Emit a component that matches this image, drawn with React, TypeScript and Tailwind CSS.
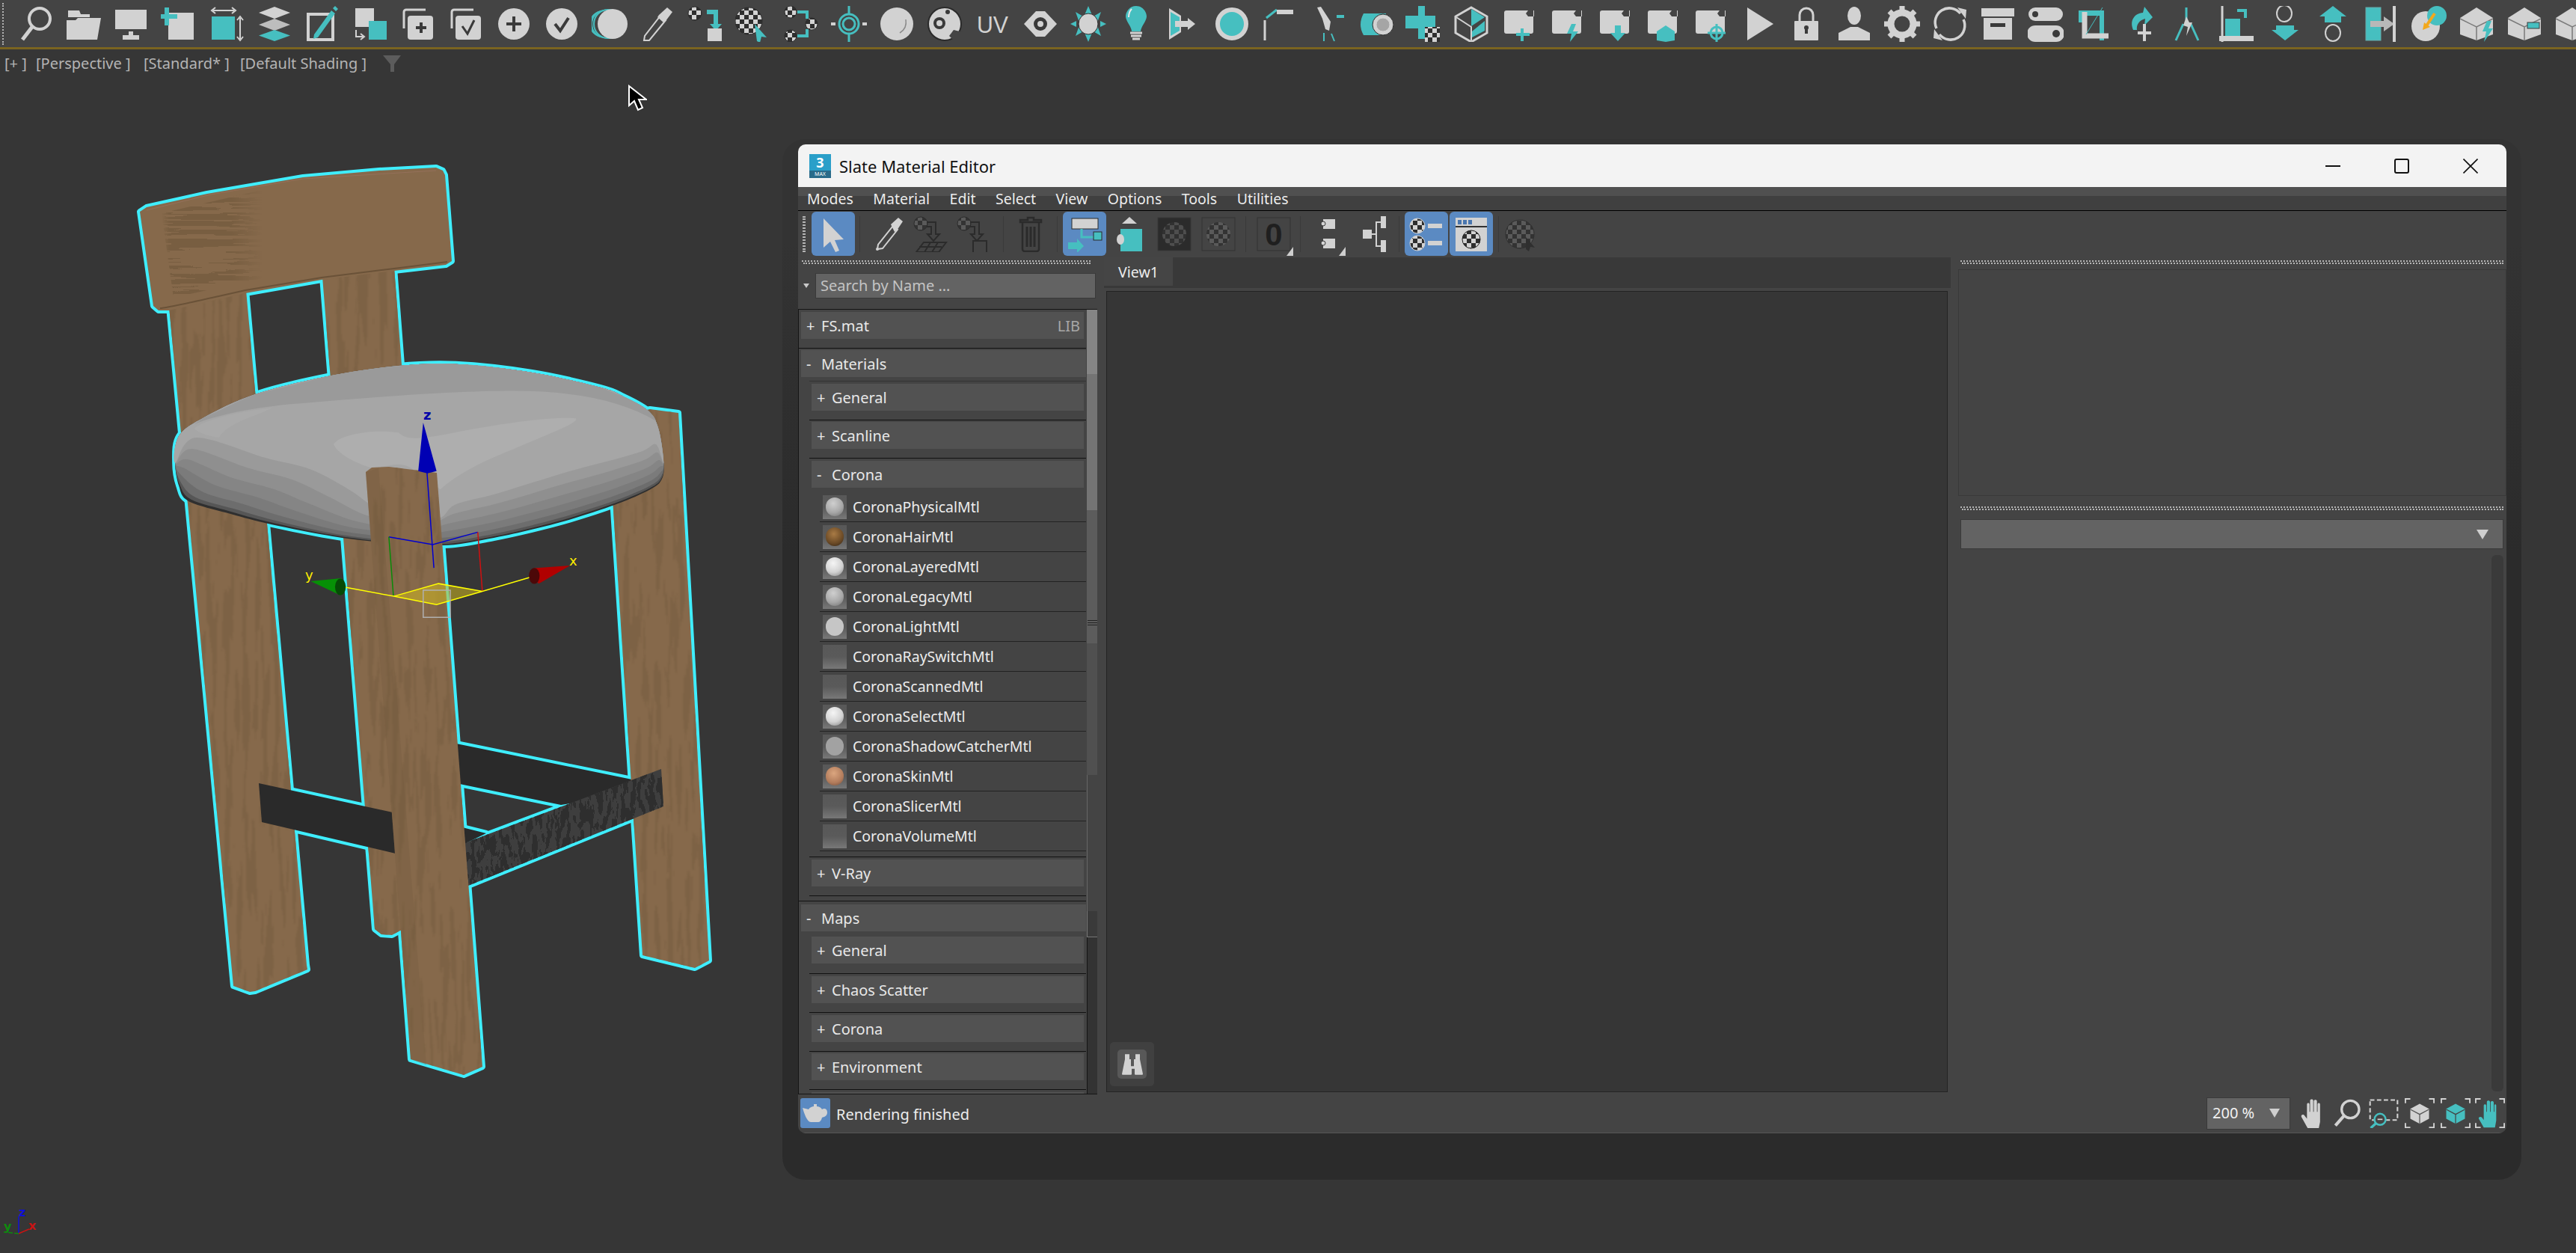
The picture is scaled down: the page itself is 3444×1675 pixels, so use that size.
import React from 'react';

const G = '#d2d2d2';
const T = '#46bfc0';
const D = '#3a3a3a';
const DIM = '#2b2b2b';
const BG = '#444444';

const P: React.FC<{ d: string; f?: string }> = ({ d, f = G }) => <path d={d} fill={f} />;
const L: React.FC<{ d: string; s?: string; w?: number }> = ({ d, s = G, w = 3 }) => (
    <path d={d} fill="none" stroke={s} strokeWidth={w} />
);
const Chk: React.FC<{ cx: number; cy: number; r: number; s?: string; dim?: boolean }> = ({ cx, cy, r, s = DIM, dim }) => (
    <circle cx={cx} cy={cy} r={r} fill={dim ? 'url(#chkdim)' : 'url(#chk)'} stroke={s} strokeWidth={1} />
);

const Icon: React.FC<{ size?: number; children: React.ReactNode }> = ({ size = 48, children }) => (
    <svg width={size} height={size} viewBox="0 0 48 48" className="shrink-0">
        {children}
    </svg>
);

const BaseBox = () => <P d="M7 6h29l-3 4 3 4h8v-8l-1 0v28a3 3 0 0 1-3 3H7a3 3 0 0 1-3-3V9a3 3 0 0 1 3-3z" />;

const Cube = () => (
    <>
        <P d="M24 2 46 16V38L24 46 2 38V16z" />
        <L d="M2 17 24 28 46 17M24 28V46" s="#7a7a7a" w={1.5} />
    </>
);

// main toolbar, left to right
const MAIN_ICONS: React.ReactNode[] = [
    <><circle cx="30" cy="17" r="14" fill="none" stroke={G} strokeWidth="4" /><L d="M20 28 7 45" w={5} /></>,
    <><P d="M4 6h15l2 5h12v4H4z" /><P d="M2 45V19h12l3-3h31l-5 29z" /></>,
    <><rect x="3" y="5" width="42" height="26" fill={G} /><rect x="21" y="34" width="6" height="5" fill={G} /><rect x="13" y="39" width="22" height="6" fill={G} /></>,
    <><rect x="10" y="9" width="34" height="36" fill={G} /><rect x="5" y="2" width="6" height="24" fill={T} /><rect x="0" y="11" width="22" height="6" fill={T} /></>,
    <><rect x="4" y="14" width="31" height="31" fill={T} /><L d="M6 6h28M9 2 4 6l5 4M31 2l5 4-5 4" w={2} /><L d="M42 16v28M38 19l4-5 4 5M38 41l4 5 4-5" w={2} /></>,
    <><P d="M24 1 45 9 24 17 3 9z" /><P d="M24 17 45 25 24 33 3 25z" f="#bdbdbd" /><P d="M24 32 45 39.500 24 47 3 39.500z" f={T} /></>,
    <><rect x="5" y="11" width="33" height="34" fill="none" stroke={G} strokeWidth="4" /><P d="M13 38 36 6l5 4-23 32-6 2z" f={T} /><P d="M38 3l3-3 4 4-3 3z" f={T} /></>,
    <><rect x="4" y="3" width="25" height="25" fill={G} /><rect x="22" y="20" width="24" height="25" fill={T} /><L d="M5 32v9h10M11 37l5 4-5 4" w={2} /></>,
    <><L d="M5 30V8a3 3 0 0 1 3-3h26" w={3} /><rect x="10" y="13" width="34" height="32" rx="4" fill={G} /><L d="M28 22v14M21 29h14" s={D} w={4} /></>,
    <><L d="M5 30V8a3 3 0 0 1 3-3h26" w={3} /><rect x="10" y="13" width="34" height="32" rx="4" fill={G} /><L d="M19 27l7 10 9-18" s={D} w={3} /></>,
    <><circle cx="24" cy="24" r="21" fill={G} /><L d="M24 14v20M14 24h20" s={D} w={4} /></>,
    <><circle cx="24" cy="24" r="21" fill={G} /><L d="M15 24l7 9 11-17" s={D} w={4} /></>,
    <><circle cx="15" cy="24" r="17" fill="none" stroke={T} strokeWidth="2" /><circle cx="18" cy="24" r="18" fill="none" stroke={T} strokeWidth="2" /><circle cx="22" cy="24" r="19" fill={BG} stroke={T} strokeWidth="2" /><circle cx="28" cy="24" r="20" fill={G} /></>,
    <><P d="M6 40 27 14l7 6-21 26-7 2z" f={BG} /><L d="M6 46l1-6 21-27 7 6-22 27z" w={2} /><P d="M26 12l11-10 7 6-9 12-3 2-8-7z" /></>,
    <><Chk cx={10} cy={10} r={9} /><L d="M26 8h12v20" s={T} w={6} /><P d="M30 24h16l-8 9z" f={T} /><rect x="27" y="30" width="19" height="17" fill={G} /></>,
    <><Chk cx={18} cy={20} r={18} /><P d="M26 24l16 18-7-1-2 8-4-2z" f={T} /></>,
    <><Chk cx={10} cy={8} r={8} /><Chk cx={38} cy={24} r={8} /><Chk cx={10} cy={40} r={8} /><L d="M19 8h13v9M19 40h13v-9" s={T} w={4} /></>,
    <><L d="M0 24h6M42 24h6" w={4} /><circle cx="24" cy="24" r="13" fill="none" stroke={T} strokeWidth="3" /><circle cx="24" cy="24" r="8" fill="none" stroke={T} strokeWidth="3" /><L d="M24 0v10M24 38v10" s={T} w={3} /></>,
    <><circle cx="24" cy="24" r="22" fill={G} /><L d="M36 18q2 12-8 18" s="#8a8a8a" w={1.5} /></>,
    <><circle cx="24" cy="24" r="22" fill={G} stroke={DIM} strokeWidth="2" /><circle cx="17" cy="23" r="8" fill={D} /><circle cx="17" cy="23" r="4" fill={G} /><circle cx="28" cy="8" r="3" fill={D} /><P d="M36 46 30 40l6-8 12 3v11z" f={BG} /></>,
    <text x="24" y="36" textAnchor="middle" fontSize="31" fontFamily="Liberation Sans" fill={G} textLength="42" lengthAdjust="spacingAndGlyphs">UV</text>,
    <><P d="M2 24 18 7h12l16 17-16 17H18z" /><circle cx="24" cy="24" r="9" fill={D} /><circle cx="24" cy="24" r="4" fill={G} /></>,
    <><P d="M24 0l5 12H19zM24 48l-5-12h10zM7 8l12 7-7 7zM41 8l-5 14-7-7zM7 40l5-14 7 7zM41 40l-12-7 7-7z" f={T} /><P d="M0 24l8-4v8zM48 24l-8-4v8z" f={T} /><ellipse cx="24" cy="24" rx="13" ry="14" fill={G} stroke={DIM} strokeWidth="1" /></>,
    <><path d="M24 0c9 0 14 8 14 14 0 6-8 14-8 20H18c0-6-8-14-8-20C10 8 15 0 24 0z" fill={T} /><L d="M18 4Q14 8 14 15" s="#eaeaea" w={2} /><L d="M16 36h16M17 40h14M19 44h10" w={3} /></>,
    <><P d="M4 3 20 13V35L4 45z" /><P d="M6 8 18 15V33L6 40z" f={T} /><P d="M12 20h17v-4l10 8-10 8v-4H12z" /></>,
    <><circle cx="24" cy="24" r="19" fill={T} stroke={G} strokeWidth="6" /></>,
    <><L d="M4 46V19" w={3} /><L d="M6 16 20 5" s={T} w={3} /><rect x="20" y="5" width="22" height="6" fill={G} /></>,
    <><P d="M10 2l5-1 13 20-2 12-5-2-4-14z" /><rect x="36" y="12" width="10" height="4" fill={T} /><L d="M29 37l4 10M19 36v11" s={T} w={2} /></>,
    <><path d="M8 10h30v29H8q-8-14 0-29z" fill={T} /><circle cx="34" cy="25" r="14" fill={G} stroke={DIM} /><circle cx="34" cy="25" r="9" fill="#a5a5a5" stroke={G} /></>,
    <><rect x="17" y="0" width="9" height="44" fill={T} /><rect x="0" y="13" width="40" height="17" fill={T} /><rect x="26" y="28" width="20" height="20" fill="url(#chk)" /></>,
    <><path d="M24 2 45 14V36L24 48 3 36V14z" fill="none" stroke={G} strokeWidth="3" /><P d="M24 4 42 15 24 27z" f={T} /><P d="M42 20v13L25 42v-8z" f={T} /><L d="M4 15 24 28V46" w={2} /></>,
    <><BaseBox /><L d="M28 30v17M20 38h18" s={T} w={4} /></>,
    <><BaseBox /><P d="M30 24l6 0-4 10h7L28 48l2-11h-6z" f={T} /></>,
    <><BaseBox /><P d="M24 26h8v10h6L28 47 18 36h6z" f={T} /></>,
    <><BaseBox /><P d="M28 26 40 34V46L28 48 16 46V34z" f={T} /></>,
    <><BaseBox /><circle cx="32" cy="36" r="8" fill="none" stroke={T} strokeWidth="3" /><L d="M32 24v24M20 36h24" s={T} w={3} /></>,
    <P d="M9 2 44 24 9 46z" />,
    <><L d="M15 20V12a9 9 0 0 1 18 0v8" w={3} /><rect x="8" y="20" width="32" height="26" rx="1" fill={G} /><circle cx="24" cy="29" r="3" fill={D} /><rect x="22" y="29" width="4" height="8" fill={D} /></>,
    <><ellipse cx="24" cy="13" rx="9" ry="12" fill={G} /><P d="M3 46V36l16-8h10l16 8v10z" /></>,
    <><circle cx="24" cy="24" r="15" fill="none" stroke={G} strokeWidth="9" /><L d="M24 0v7M24 41v7M0 24h7M41 24h7M7 7l5 5M41 7l-5 5M7 41l5-5M41 41l-5-5" w={7} /></>,
    <><L d="M6 30A19 19 0 0 1 38 10" w={3.500} /><P d="M34 2 46 5l-1 12z" /><L d="M42 18A19 19 0 0 1 10 38" w={3.500} /><P d="M14 46 2 43l1-12z" /></>,
    <><rect x="2" y="3" width="44" height="11" fill={G} /><rect x="5" y="16" width="38" height="29" fill={G} /><rect x="14" y="23" width="20" height="5" fill={D} /></>,
    <><path d="M10 2h28a8 8 0 0 1 0 18H10a8 8 0 0 1 0-18z" fill={G} /><circle cx="10" cy="11" r="4" fill={D} /><path d="M10 26h28a8 8 0 0 1 0 22H10a8 8 0 0 1 0-22z" fill={G} /><circle cx="38" cy="37" r="5" fill={D} /></>,
    <><rect x="4" y="6" width="7" height="16" fill={T} /><P d="M8 6h30v40h-6V13H14z" f={T} /><L d="M12 8v32h32" w={7} /><L d="M14 38 36 2" s={T} w={1} /></>,
    <><P d="M13 32C8 20 14 10 26 9l2-8 11 14-11 11 1-9c-8 2-12 8-11 15z" f={T} /><L d="M28 24v23M19 36h18" w={4} /></>,
    <><L d="M20 2v16" s={T} w={3} /><L d="M16 24 6 46M26 24l10 22" s={T} w={3} /><P d="M20 14l4 8h4l-8 18 2-12-6-2z" /></>,
    <><L d="M4 0v48" w={3} /><rect x="8" y="17" width="20" height="25" fill={T} /><L d="M24 6h11v10" s={T} w={4} /><rect x="0" y="40" width="46" height="7" fill={G} /></>,
    <><ellipse cx="23" cy="10" rx="10" ry="11" fill="none" stroke={G} strokeWidth="2" /><P d="M12 26h24v6h6L24 46 6 32h6z" f={T} /></>,
    <><P d="M24 0l18 14h-7v8H13v-8H6z" f={T} /><ellipse cx="24" cy="36" rx="10" ry="11" fill="none" stroke={G} strokeWidth="2" /></>,
    <><rect x="4" y="2" width="20" height="44" fill={T} stroke="#6aa" /><P d="M10 20h18v-6l14 10-14 10v-6H10z" f="#b8b8b8" /><rect x="40" y="0" width="4" height="48" fill={G} /></>,
    <><ellipse cx="20" cy="27" rx="19" ry="20" fill={G} /><ellipse cx="35" cy="13" rx="13" ry="13" fill={T} /><L d="M32 10 20 28" s="#f2a81d" w={4} /><P d="M16 32l2-10 8 6z" f="#f2a81d" /></>,
    <><Cube /><P d="M38 20h6l-4 10h6L34 48l3-14h-5z" f={T} /></>,
    <><Cube /><rect x="28" y="22" width="16" height="8" fill={T} stroke={D} /></>,
    <Cube />,
];

const DimChecker: React.FC<{ cursor?: boolean }> = ({ cursor }) => (
    <>
        <circle cx="22" cy="24" r="19" fill="url(#chkdim)" stroke="#2f2f2f" />
        {cursor && <P d="M30 28l12 14-6-1-2 6-4-3z" f="#2f2f2f" />}
    </>
);

const Corner = () => <div className="absolute right-[3px] bottom-0 w-0 h-0 border-l-[9px] border-l-transparent border-b-[12px] border-b-[#cfcfcf]" />;

const TOOL_ARROW = <P d="M11 3 11 42 20 34 27 48 32 46 26 32 38 31z" />;
const TOOL_DROPPER = <><L d="M10 44l1-6 20-25 6 5-20 25z" w={2} /><P d="M28 11l10-9 6 5-8 12-3 2z" /><circle cx="10" cy="44" r="2" fill={G} /></>;
const TOOL_ASSIGN = <><Chk cx={10} cy={10} r={9} dim /><L d="M18 8h12v16h5l-8 9-8-9h5V14h-6" s={DIM} w={2} /><L d="M14 35h30l-10 13H4zM23 35 15 48M33 35l-8 13M8 41h30" s={DIM} w={2} /></>;
const TOOL_PUT = <><Chk cx={10} cy={10} r={9} dim /><L d="M18 8h12v16h5l-8 9-8-9h5V14h-6" s={DIM} w={2} /><rect x="22" y="33" width="18" height="16" fill={BG} stroke={DIM} strokeWidth="2" /></>;
const TOOL_TRASH = <><L d="M13 8h22v36a3 3 0 0 1-3 3H16a3 3 0 0 1-3-3zM10 8h28v-3H28V2h-8v3H10z" s={DIM} w={2.500} /><L d="M19 14v27M24 14v27M29 14v27" s={DIM} w={3} /></>;
const TOOL_LAYOUT = <><rect x="7" y="3" width="35" height="14" fill={G} stroke="#2b2b2b" /><L d="M20 17v11h18" s={T} w={3} /><rect x="36" y="21" width="11" height="11" fill={T} stroke="#2b2b2b" /><P d="M2 35h12v-5l9 10-9 9v-5H2z" f={T} /></>;
const TOOL_BG = <><P d="M24 1l10 9H14z" /><rect x="12" y="17" width="29" height="30" fill={T} /><ellipse cx="12" cy="31" rx="5" ry="7" fill={G} /></>;
const TOOL_BOX_A = <><rect x="2" y="2" width="44" height="44" fill="#2b2b2b" stroke="#383838" /><circle cx="24" cy="24" r="16" fill="url(#chkdim)" opacity="0.75" /></>;
const TOOL_BOX_B = <><rect x="2" y="2" width="44" height="44" fill={BG} stroke="#333" /><circle cx="24" cy="24" r="16" fill="url(#chkdim)" /></>;
const TOOL_NUM = <><rect x="2" y="2" width="44" height="44" fill={BG} stroke="#333" /><text x="24" y="39" textAnchor="middle" fontSize="42" fontWeight="700" fontFamily="Liberation Sans" fill="#1f1f1f">0</text></>;
const TOOL_PAIR = <><rect x="20" y="4" width="16" height="13" fill={G} /><circle cx="20" cy="10" r="3" fill={G} stroke={D} /><rect x="20" y="30" width="16" height="13" fill={G} /><circle cx="20" cy="36" r="3" fill={G} stroke={D} /></>;
const TOOL_TREE = <><rect x="10" y="18" width="12" height="12" fill={G} /><L d="M22 24h6V8h8M28 24v16h8" w={2} /><rect x="34" y="0" width="7" height="16" fill={G} /><rect x="34" y="32" width="7" height="16" fill={G} /></>;
const TOOL_LIST = <><Chk cx={12} cy={13} r={10} s={G} /><Chk cx={12} cy={36} r={10} s={G} /><rect x="26" y="10" width="19" height="6" fill={G} /><rect x="26" y="33" width="19" height="6" fill={G} /></>;
const TOOL_WIN = <><rect x="3" y="2" width="42" height="45" fill={G} /><rect x="3" y="13" width="42" height="2" fill="#333" /><rect x="6" y="5" width="5" height="6" fill="#4a76ae" /><rect x="13" y="5" width="5" height="6" fill="#4a76ae" /><rect x="20" y="5" width="5" height="6" fill="#4a76ae" /><circle cx="24" cy="31" r="12" fill="url(#chk)" stroke="#222" /></>;

const Cell: React.FC<{ w?: number; active?: boolean; corner?: boolean; children: React.ReactNode }> = ({ w = 58, active, corner, children }) => (
    <div style={{ width: w }} className={`relative shrink-0 h-[59px] flex items-center justify-center rounded-[6px] ${active ? 'bg-[#5b8ac2]' : ''}`}>
        <Icon>{children}</Icon>
        {corner && <Corner />}
    </div>
);

const Sep: React.FC<{ l: number; r: number }> = ({ l, r }) => (
    <div style={{ marginLeft: l, marginRight: r }} className="shrink-0 w-px h-[48px] bg-[#3a3a3a]" />
);

const DotGrip = () => (
    <div className="flex flex-col gap-[1px]">
        <div className="h-[2px] border-t-2 border-dotted border-[#b4b4b4]" />
        <div className="h-[2px] border-t-2 border-dotted border-[#b4b4b4] ml-[2px]" />
    </div>
);

type ThumbKind = 'gray' | 'hair' | 'white' | 'flat' | 'none' | 'shadow' | 'skin';

const SPHERE: Record<ThumbKind, string> = {
    gray: 'bg-[radial-gradient(circle_at_42%_32%,#cfcfcf,#a8a8a8_55%,#6e6e6e)]',
    hair: 'bg-[radial-gradient(circle_at_45%_35%,#a97b45,#6b4a26_60%,#2e2115)]',
    white: 'bg-[radial-gradient(circle_at_42%_32%,#f5f5f5,#d2d2d2_55%,#7f7f7f)]',
    flat: 'bg-[#c6c6c6]',
    none: 'bg-transparent',
    shadow: 'bg-[#a2a2a2]',
    skin: 'bg-[radial-gradient(circle_at_45%_35%,#dba67f,#b27c5c_60%,#6e4a38)]',
};

const MATERIALS: { name: string; thumb: ThumbKind }[] = [
    { name: 'CoronaPhysicalMtl', thumb: 'gray' },
    { name: 'CoronaHairMtl', thumb: 'hair' },
    { name: 'CoronaLayeredMtl', thumb: 'white' },
    { name: 'CoronaLegacyMtl', thumb: 'gray' },
    { name: 'CoronaLightMtl', thumb: 'flat' },
    { name: 'CoronaRaySwitchMtl', thumb: 'none' },
    { name: 'CoronaScannedMtl', thumb: 'none' },
    { name: 'CoronaSelectMtl', thumb: 'white' },
    { name: 'CoronaShadowCatcherMtl', thumb: 'shadow' },
    { name: 'CoronaSkinMtl', thumb: 'skin' },
    { name: 'CoronaSlicerMtl', thumb: 'none' },
    { name: 'CoronaVolumeMtl', thumb: 'none' },
];

const Thumb: React.FC<{ kind: ThumbKind }> = ({ kind }) => (
    <div className="relative shrink-0 w-[32px] h-[32px] ml-[4px] overflow-hidden bg-linear-to-b from-[#585858] via-[#5a5a5a] to-[#787878]">
        <div className={`absolute left-[4px] top-[3px] w-[24px] h-[25px] rounded-full ${SPHERE[kind]}`} />
    </div>
);

const Header: React.FC<{ sign: string; label: string; right?: string }> = ({ sign, label, right }) => (
    <div className="h-[36px] bg-[#525252] flex items-center pt-[2px] text-[20px] text-[#e8e8e8] leading-none">
        <span className="w-[27px] pl-[7px] shrink-0">{sign}</span>
        <span>{label}</span>
        {right && <span className="ml-auto pr-[5px] text-[#a8a8a8]">{right}</span>}
    </div>
);

// second level rollout inside a Materials or Maps group
const SubSection: React.FC<{ label: string; top?: number; bottom?: number }> = ({ label, top = 3, bottom = 12 }) => (
    <div style={{ paddingTop: top, paddingBottom: bottom }} className="pl-[3px] pr-[3px] border-b border-[#111]">
        <Header sign="+" label={label} />
    </div>
);

const MaterialList = () => (
    <div className="h-[1050px] flex overflow-hidden border-t border-b border-[#151515] border-l">
        <div className="w-[384px] shrink-0 overflow-hidden">
            <div className="pt-[3px] pl-[3px] pr-[3px] pb-[12px] border-b border-[#111]">
                <Header sign="+" label="FS.mat" right="LIB" />
            </div>
            <div className="pt-[2px] pb-[6px] border-b border-[#111]">
                <div className="pl-[3px]">
                    <Header sign="-" label="Materials" />
                </div>
                <div className="ml-[14px] mt-[5px] border-t border-[#333]">
                    <SubSection label="General" />
                    <SubSection label="Scanline" top={2} />
                    <div className="pt-[3px] pb-[7px] border-b border-[#111]">
                        <div className="px-[3px]">
                            <Header sign="-" label="Corona" />
                        </div>
                        <div className="mt-[6px] ml-[14px]">
                            {MATERIALS.map((m) => (
                                <div key={m.name} className="h-[40px] flex items-center border-b border-[#222] text-[19.500px] text-[#ececec]">
                                    <Thumb kind={m.thumb} />
                                    <span className="ml-[8px]">{m.name}</span>
                                </div>
                            ))}
                        </div>
                    </div>
                    <SubSection label="V-Ray" />
                </div>
            </div>
            <div className="pt-[4px]">
                <div className="pl-[3px]">
                    <Header sign="-" label="Maps" />
                </div>
                <div className="ml-[14px] mt-[4px]">
                    <SubSection label="General" bottom={13} />
                    <SubSection label="Chaos Scatter" />
                    <SubSection label="Corona" />
                    <SubSection label="Environment" top={2} />
                    <div className="pt-[3px] px-[3px]">
                        <div className="h-[36px] bg-[#525252]" />
                    </div>
                </div>
            </div>
        </div>
        <div className="w-[15px] ml-[1px] shrink-0 flex flex-col">
            <div className="h-[86px] bg-[#858585]" />
            <div className="h-[182px] bg-[#747474]" />
            <div className="h-[178px] bg-[#5c5c5c] flex flex-col justify-end pb-[24px] gap-[2px] px-[1px]">
                <div className="h-px bg-[#222]" />
                <div className="h-px bg-[#222]" />
                <div className="h-px bg-[#222]" />
            </div>
            <div className="h-[176px] bg-[#505050]" />
            <div className="h-[182px] bg-[#444] border-l border-[#666]" />
            <div className="h-[35px] bg-[#3a3a3a] border-l border-b border-[#777]" />
            <div className="flex-1 bg-[#333] border-l border-r border-[#151515]" />
        </div>
    </div>
);

const SliceIcon: React.FC<{ children: React.ReactNode; w?: number }> = ({ children, w = 48 }) => (
    <div style={{ width: w }} className="shrink-0 flex justify-center">
        <Icon size={40}>{children}</Icon>
    </div>
);

const Brackets = () => <L d="M1 8V1h8M39 1h8v7M1 40v7h8M39 47h8v-7" w={2.500} />;

const SlateEditor = () => (
    <div className="absolute left-[1067px] top-[193px] w-[2284px] h-[1322px] flex flex-col bg-[#444] rounded-t-[10px] rounded-b-[10px] overflow-hidden">
        <div className="h-[57px] shrink-0 bg-[#f3f3f3] flex items-center pl-[15px] text-[#111]">
            <div className="w-[29px] h-[32px] flex flex-col items-center">
                <div className="w-full h-[22px] bg-[#2a9fc9] text-white font-bold text-[18px] leading-[22px] text-center">3</div>
                <div className="w-full h-[10px] bg-[#2a6b8a] text-white text-[7px] leading-[10px] text-center">MAX</div>
            </div>
            <span className="ml-[11px] text-[22px] leading-none pt-[1px]">Slate Material Editor</span>
            <div className="ml-auto flex mr-[2px]">
                <div className="w-[92px] h-[57px] flex items-center justify-center">
                    <div className="w-[20px] h-[2px] bg-[#111]" />
                </div>
                <div className="w-[92px] h-[57px] flex items-center justify-center">
                    <div className="w-[20px] h-[20px] border-2 border-[#111] rounded-[3px]" />
                </div>
                <div className="w-[92px] h-[57px] flex items-center justify-center">
                    <svg width="20" height="20" viewBox="0 0 20 20">
                        <path d="M0.500 0.500 19.500 19.500M19.500 0.500 0.500 19.500" stroke="#111" strokeWidth="1.600" />
                    </svg>
                </div>
            </div>
        </div>

        <div className="h-[32px] shrink-0 border-b border-black flex items-center gap-[26.500px] pl-[12px] pt-[1px] text-[19.500px] leading-none text-[#ececec] bg-linear-to-b from-[#505050] from-40% to-[#404040] to-40%">
            {['Modes', 'Material', 'Edit', 'Select', 'View', 'Options', 'Tools', 'Utilities'].map((m) => (
                <span key={m}>{m}</span>
            ))}
        </div>

        <div className="h-[61px] shrink-0 flex items-center pl-[6px]">
            <div className="w-[4px] h-[48px] mr-[8px] border-l-2 border-r-2 border-dotted border-[#b4b4b4]" />
            <Cell active>{TOOL_ARROW}</Cell>
            <Sep l={6} r={8} />
            <Cell>{TOOL_DROPPER}</Cell>
            <Cell>{TOOL_ASSIGN}</Cell>
            <Cell>{TOOL_PUT}</Cell>
            <Sep l={9} r={7} />
            <Cell>{TOOL_TRASH}</Cell>
            <Sep l={6} r={7} />
            <Cell active>{TOOL_LAYOUT}</Cell>
            <Cell w={62}>{TOOL_BG}</Cell>
            <Cell>{TOOL_BOX_A}</Cell>
            <Cell w={59}>{TOOL_BOX_B}</Cell>
            <Sep l={7} r={8} />
            <Cell corner>{TOOL_NUM}</Cell>
            <Sep l={6} r={5} />
            <Cell corner>{TOOL_PAIR}</Cell>
            <Cell w={68}>{TOOL_TREE}</Cell>
            <Sep l={0} r={7} />
            <Cell active>{TOOL_LIST}</Cell>
            <div className="w-[2px]" />
            <Cell active>{TOOL_WIN}</Cell>
            <Sep l={7} r={1} />
            <Cell><DimChecker cursor /></Cell>
        </div>

        <div className="flex-1 flex min-h-0">
            <div className="w-[400px] shrink-0 flex flex-col">
                <div className="pt-[5px] pl-[5px] w-[391px]">
                    <DotGrip />
                </div>
                <div className="mt-[12px] h-[34px] flex items-center">
                    <svg width="23" height="10" viewBox="0 0 23 10" className="shrink-0">
                        <path d="M7 2h8l-4 6z" fill="#c9c9c9" />
                    </svg>
                    <div className="w-[375px] h-[34px] bg-[#636363] border border-[#3a3a3a] pl-[6px] flex items-center text-[20px] leading-none text-[#c4c4c4]">Search by Name ...</div>
                </div>
                <div className="mt-[14px]">
                    <MaterialList />
                </div>
            </div>

            <div className="ml-[9px] w-[1132px] shrink-0 flex flex-col">
                <div className="mt-[1px] h-[41px] bg-[#393939] flex">
                    <div className="w-[92px] h-[38px] bg-[#454545] flex items-center justify-center text-[19.500px] leading-none pt-[1px] text-[#ececec]">View1</div>
                </div>
                <div className="relative mt-[4px] ml-[3px] mr-[4px] h-[1071px] bg-[#363636] border border-[#242424]">
                    <div className="absolute left-[4px] bottom-[7px] w-[59px] h-[59px] rounded-[5px] bg-[#404040] flex items-center justify-center">
                        <div className="w-[39px] h-[39px] rounded-[5px] bg-[#585858] flex items-center justify-center">
                            <svg width="30" height="30" viewBox="0 0 30 26" preserveAspectRatio="none">
                                <path d="M5 1h6v6h2l0 8h4V7h2V1h6v6l4 17a1 1 0 0 1-1 1h-9a1 1 0 0 1-1-1V18h-4v6a1 1 0 0 1-1 1H2a1 1 0 0 1-1-1L5 7z" fill={G} />
                            </svg>
                        </div>
                    </div>
                </div>
            </div>

            <div className="ml-[10px] flex-1 flex flex-col min-w-0">
                <div className="pt-[5px] pl-[3px] pr-[4px]">
                    <DotGrip />
                </div>
                <div className="mt-[7px] h-[303px] bg-[#444] border border-[#393939]" />
                <div className="mt-[14px] pl-[3px] pr-[4px]">
                    <DotGrip />
                </div>
                <div className="mt-[12px] ml-[3px] mr-[4px] h-[40px] bg-[#636363] border border-[#3a3a3a] flex items-center justify-end pr-[19px]">
                    <svg width="16" height="13" viewBox="0 0 16 13">
                        <path d="M0 0h16L8 13z" fill="#cfcfcf" />
                    </svg>
                </div>
                <div className="mt-[8px] mr-[4px] self-end w-[16px] h-[717px] rounded-t-[6px] rounded-b-[6px] bg-[#3a3a3a]" />
            </div>
        </div>

        <div className="h-[51px] shrink-0 pb-[3px] pt-[1px] flex items-center border-b border-[#575757]">
            <div className="ml-[3px] w-[40px] h-[40px] rounded-[3px] bg-[#5b8ac2] flex items-center justify-center">
                <svg width="34" height="26" viewBox="0 0 34 26">
                    <path d="M0 6l8 2c2-3 5-4 7-4V1h4v3c3 0 5 1 7 4 3-2 7-1 7 4s-4 6-7 7c-1 4-3 6-5 6H11C6 25 2 13 0 6z" fill={G} />
                </svg>
            </div>
            <span className="ml-[8px] mt-[4px] text-[20px] leading-none text-[#ececec]">Rendering finished</span>
            <div className="ml-auto flex items-center">
                <div className="w-[112px] h-[43px] bg-[#636363] border border-[#3a3a3a] flex items-center pl-[7px] text-[20px] leading-none text-[#f2f2f2] mr-[5px]">
                    <span>200 %</span>
                    <svg width="14" height="12" viewBox="0 0 14 12" className="ml-[20px]">
                        <path d="M0 0h14L7 12z" fill="#cfcfcf" />
                    </svg>
                </div>
                <SliceIcon>
                    <g transform="translate(5 0)">
                        <P d="M12 48 2 30c-1-3 3-5 5-2l4 5V10c0-3 4-3 4 0v12h1V4c0-3 5-3 5 0v18h1V5c0-3 5-3 5 0v17h1V10c0-3 4-3 4 0v28l-2 10z" />
                    </g>
                </SliceIcon>
                <SliceIcon>
                    <g transform="translate(-2 0)">
                        <circle cx="30" cy="18" r="14" fill="none" stroke={G} strokeWidth="4" />
                        <L d="M20 28 6 44" w={5} />
                    </g>
                </SliceIcon>
                <SliceIcon>
                    <rect x="2" y="3" width="44" height="32" fill="none" stroke={G} strokeWidth="2.500" strokeDasharray="7 4" />
                    <circle cx="18" cy="34" r="9" fill={BG} stroke={T} strokeWidth="3" />
                    <L d="M12 40 3 48" s={T} w={4} />
                    <L d="M14 34h8" s={G} w={2} />
                </SliceIcon>
                <SliceIcon>
                    <Brackets />
                    <P d="M24 9 39 17V33L24 41 9 33V17z" />
                    <L d="M9 18 24 26 39 18M24 26V41" s="#555" w={1.500} />
                </SliceIcon>
                <SliceIcon>
                    <Brackets />
                    <P d="M24 9 39 17V33L24 41 9 33V17z" f={T} />
                    <L d="M9 18 24 26 39 18M24 26V41" s="#444" w={1.500} />
                </SliceIcon>
                <SliceIcon w={44}>
                    <Brackets />
                    <P d="M14 47 6 33c-1-3 3-4 5-2l3 4V12c0-3 4-3 4 0v10h1V6c0-3 5-3 5 0v16h1V7c0-3 5-3 5 0v15h1V12c0-3 3-3 3 0v24l-2 11z" f={T} />
                </SliceIcon>
            </div>
        </div>
    </div>
);

// seat contours in the coordinates of the seat group below
const SEAT_TOP = [[1445, 960], [1432, 860], [1405, 805], [1340, 762], [1280, 735], [1100, 690], [900, 665], [750, 670], [570, 700], [375, 755], [240, 825], [175, 880], [165, 960]];
const SEAT_OUTER = [[1440, 1010], [1410, 1040], [1320, 1085], [1200, 1130], [1100, 1160], [1000, 1185], [880, 1207], [760, 1203], [650, 1192], [550, 1175], [400, 1140], [300, 1110], [200, 1075], [175, 1030]];
const SEAT_INNER = [[1425, 905], [1390, 925], [1300, 955], [1200, 985], [1100, 1020], [1000, 1055], [900, 1085], [860, 1125], [800, 1120], [700, 1100], [620, 1040], [520, 980], [400, 945], [220, 885]];
const SEAT_BANDS: [number, string][] = [
    [0, '#2f2f2f'],
    [0.035, '#565656'],
    [0.09, '#6d6d6d'],
    [0.2, '#7b7b7b'],
    [0.36, '#858585'],
    [0.55, '#8f8f8f'],
    [0.77, '#9a9a9a'],
    [1, '#a6a6a6'],
];

// closed Catmull-Rom curve through the contour points
const smooth = (pts: number[][]) => {
    const n = pts.length;
    let d = `M${pts[0][0]} ${pts[0][1]}`;
    for (let i = 0; i < n; i++) {
        const p0 = pts[(i - 1 + n) % n];
        const p1 = pts[i];
        const p2 = pts[(i + 1) % n];
        const p3 = pts[(i + 2) % n];
        d += `C${p1[0] + (p2[0] - p0[0]) / 6} ${p1[1] + (p2[1] - p0[1]) / 6} ${p2[0] - (p3[0] - p1[0]) / 6} ${p2[1] - (p3[1] - p1[1]) / 6} ${p2[0]} ${p2[1]}`;
    }
    return d + 'Z';
};

const seatPath = (t: number) => {
    const low = SEAT_OUTER.map((p, i) => [p[0] + (SEAT_INNER[i][0] - p[0]) * t, p[1] + (SEAT_INNER[i][1] - p[1]) * t]);
    return smooth([...SEAT_TOP, ...low.reverse()]);
};

const BACKREST = '187,283 196,277 277,259 405,237 507,228 583,224 592,228 595,234 604,349 596,354 527,362 430,374 328,392 226,415 212,415 205,409';
const LEFT_LEG = '226,410 329,388 410,1290 411,1296 341,1325 334,1326 312,1318';
const REAR_POST = '431,370 527,358 595,1240 535,1244 524,1250 510,1249 501,1242';
const RIGHT_LEG = '812,560 869,547 907,552 948,1284 929,1294 859,1277';
const FRONT_LEG = '489,631 497,625 520,624 584,632 645,1426 620,1437 549,1416';
const LEFT_BAR = '346,1047 525,1086 529,1141 350,1099';
const BACK_BAR = '600,992 845,1042 845,1060 750,1076 600,1045';
const FRONT_BAR = '884,1028 887,1078 626,1184 621,1127';
const BAR_STUB = '606,1103 650,1114 621,1128 606,1128';
const SEAT_GROUP = 'translate(150 190) scale(0.5102 0.4464)';

const Wood: React.FC<{ points: string }> = ({ points }) => (
    <>
        <polygon points={points} fill="#86694b" />
        <polygon points={points} fill="#000" filter="url(#grainV)" />
    </>
);

const nonScaling = { vectorEffect: 'non-scaling-stroke' as const };

const GrainFilter: React.FC<{ id: string; freq: string; seed: number; rgb: string; table: string; blur: number }> = ({ id, freq, seed, rgb, table, blur }) => (
    <filter id={id} filterUnits="userSpaceOnUse" x="0" y="0" width="1040" height="1675" colorInterpolationFilters="sRGB">
        <feTurbulence type="fractalNoise" baseFrequency={freq} numOctaves="3" seed={seed} />
        <feColorMatrix type="matrix" values={`0 0 0 0 ${rgb.split(' ')[0]}  0 0 0 0 ${rgb.split(' ')[1]}  0 0 0 0 ${rgb.split(' ')[2]}  1 0 0 0 0`} />
        <feComponentTransfer>
            <feFuncA type="discrete" tableValues={table} />
        </feComponentTransfer>
        <feGaussianBlur stdDeviation={blur} />
        <feComposite in2="SourceAlpha" operator="in" />
    </filter>
);

const Chair = () => (
    <svg width="1040" height="1675" viewBox="0 0 1040 1675" className="absolute left-0 top-0">
        <defs>
            <pattern id="chk" width="12" height="12" patternUnits="userSpaceOnUse">
                <rect width="12" height="12" fill={G} />
                <rect width="6" height="6" fill="#2e2e2e" />
                <rect x="6" y="6" width="6" height="6" fill="#2e2e2e" />
            </pattern>
            <pattern id="chkdim" width="12" height="12" patternUnits="userSpaceOnUse">
                <rect width="12" height="12" fill="#5a5a5a" />
                <rect width="6" height="6" fill="#333" />
                <rect x="6" y="6" width="6" height="6" fill="#333" />
            </pattern>
            <linearGradient id="restFade" gradientUnits="userSpaceOnUse" x1="216" y1="0" x2="350" y2="0">
                <stop offset="0" stopColor="#000" />
                <stop offset="0.08" stopColor="#fff" />
                <stop offset="0.7" stopColor="#fff" />
                <stop offset="1" stopColor="#000" />
            </linearGradient>
            <mask id="restMask" maskUnits="userSpaceOnUse" x="0" y="0" width="1040" height="1675">
                <rect width="1040" height="1675" fill="url(#restFade)" />
            </mask>
            <GrainFilter id="grainV" freq="0.12 0.009" seed={7} rgb="0.49 0.385 0.27" table="0 0 0 0 0 0 0 0 0 1 1 1 1 1 1 1" blur={0.8} />
            <GrainFilter id="grainH" freq="0.009 0.2" seed={3} rgb="0.47 0.37 0.255" table="0 0 0 0 0 0 0 0 1 1 1 1 1 1 1 1" blur={0.6} />
            <GrainFilter id="grainBar" freq="0.16 0.05" seed={11} rgb="0.18 0.18 0.18" table="0 0 0 0 0 0 0 0 1 1 1 1 1 1 1 1" blur={0.3} />
        </defs>

        {/* selection outline: every part stroked first, then painted over */}
        <g fill="#3feeff" stroke="#3feeff" strokeWidth="8" strokeLinejoin="round">
            {[BACKREST, LEFT_LEG, REAR_POST, RIGHT_LEG, FRONT_LEG, LEFT_BAR, BACK_BAR, FRONT_BAR, BAR_STUB].map((p) => (
                <polygon key={p} points={p} />
            ))}
            <path d={seatPath(0)} transform={SEAT_GROUP} style={nonScaling} />
        </g>

        <Wood points={REAR_POST} />
        <Wood points={LEFT_LEG} />
        <polygon points={BACK_BAR} fill="#2a2a2a" />
        <Wood points={RIGHT_LEG} />
        <polygon points={LEFT_BAR} fill="#2a2a2a" />
        <polygon points={BAR_STUB} fill="#2a2a2a" />
        <polygon points={FRONT_BAR} fill="#3e3e3e" />
        <polygon points={FRONT_BAR} fill="#000" filter="url(#grainBar)" />

        <polygon points={BACKREST} fill="#86694b" />
        <g mask="url(#restMask)">
            <polygon points="216,285 350,254 358,370 232,398" fill="#000" filter="url(#grainH)" />
        </g>
        <path d="M214 412 Q222 412 328 388 L430 371 L527 359 L598 350" fill="none" stroke="#6a5238" strokeWidth="2" />
        <path d="M196 281 L282 260 L405 239 L583 228" fill="none" stroke="#94705a" strokeWidth="1" />

        <g transform={SEAT_GROUP}>
            {SEAT_BANDS.map(([t, c]) => (
                <path key={c} d={seatPath(t)} fill={c} />
            ))}
            <path d="M215 845 C290 810 400 790 500 782 C700 762 900 745 1050 745 C1200 745 1330 770 1425 835 C1420 810 1380 780 1340 762 L1280 735 C1200 710 1000 665 900 665 C800 660 650 680 570 700 L375 755 C320 780 280 805 240 825Z" fill="#9a9a9a" />
            <path d="M215 858 C240 830 340 805 420 795 C380 820 300 840 280 885 C250 880 225 870 215 858Z" fill="#aaaaaa" />
            <path d="M580 905 C600 870 700 860 750 870 C770 890 790 890 850 880 C1000 845 1150 820 1215 827 C1225 840 1150 870 1050 920 C960 960 900 1000 870 1030 L860 1040 L800 990 C760 950 740 970 680 975 C630 960 590 930 580 905Z" fill="#aeaeae" />
        </g>

        <Wood points={FRONT_LEG} />
        <polygon points="489,631 506,626 570,1424 549,1416" fill="#70573c" opacity="0.25" />

        <g transform={SEAT_GROUP}>
            <g fill="none" strokeWidth="1.500">
                <path d="M825 990 L843 1275" stroke="#0000d0" style={nonScaling} />
                <path d="M725 1182 L840 1205 L958 1168" stroke="#0000d0" style={nonScaling} />
                <path d="M725 1182 L737 1360" stroke="#0a8a0a" style={nonScaling} />
                <path d="M958 1168 L970 1345" stroke="#d01010" style={nonScaling} />
            </g>
            <polygon points="738,1360 855,1322 970,1345 850,1385" fill="#d0b820" opacity="0.55" />
            <path d="M605 1332 L738 1360 L855 1322 L970 1345 L1105 1300 M738 1360 L850 1385 L970 1345" fill="none" stroke="#ffff00" strokeWidth="1.500" style={nonScaling} />
            <polygon points="815,840 802,985 826,992 850,985" fill="#0000b4" />
            <polygon points="1200,1268 1105,1276 1095,1298 1118,1322" fill="#b00000" />
            <ellipse cx="1106" cy="1299" rx="14" ry="24" fill="#4c0808" />
            <polygon points="520,1315 600,1306 612,1330 598,1357" fill="#069006" />
            <ellipse cx="598" cy="1332" rx="14" ry="25" fill="#064a06" />
            <rect x="815" y="1342" width="71" height="81" fill="none" stroke="#b0b0b0" strokeWidth="1.500" style={nonScaling} />
        </g>
        <g fontFamily="DejaVu Sans" fontSize="18">
            <text x="566" y="561" fill="#0000a8" fontWeight="700">z</text>
            <text x="761" y="756" fill="#ffee00">x</text>
            <text x="408" y="775" fill="#ffee00">y</text>
        </g>

        {/* world axes in the corner */}
        <path d="M25 1649 V1626" stroke="#1010d8" strokeWidth="1.500" />
        <path d="M25 1649 L39 1643" stroke="#c81414" strokeWidth="1.500" />
        <path d="M25 1649 L5 1647" stroke="#0e8a0e" strokeWidth="1.500" strokeDasharray="6 2" />
        <g fontFamily="DejaVu Sans" fontSize="16" fontWeight="700">
            <text x="25" y="1626" fill="#1010d8">z</text>
            <text x="38" y="1644" fill="#c81414">x</text>
            <text x="5" y="1645" fill="#0e8a0e">y</text>
        </g>
    </svg>
);

export default function App() {
    return (
        <div className="relative w-[3444px] h-[1675px] overflow-hidden flex flex-col bg-[#363636] font-['Noto_Sans',sans-serif]">
            <div className="relative z-10 shrink-0 h-[66px] bg-[#444] border-b-[3px] border-[#7a6420] flex items-center overflow-hidden">
                <div className="w-[15px] shrink-0 h-[56px] flex">
                    <div className="ml-[3px] w-[2px] h-full border-l-2 border-dotted border-[#b4b4b4]" />
                </div>
                {MAIN_ICONS.map((icon, i) => (
                    <div key={i} className="w-[64px] shrink-0 flex justify-center">
                        <Icon>{icon}</Icon>
                    </div>
                ))}
            </div>

            <div className="relative z-10 flex items-center pl-[6px] h-[38px] text-[20px] leading-none text-[#b4b4b4]">
                <span className="w-[42px] shrink-0">[+ ]</span>
                <span className="w-[144px] shrink-0">[Perspective ]</span>
                <span className="w-[129px] shrink-0">[Standard* ]</span>
                <span className="w-[191px] shrink-0">[Default Shading ]</span>
                <svg width="24" height="22" viewBox="0 0 24 22">
                    <path d="M0 0h24L15 12v10h-5V12z" fill="#5c5c5c" />
                </svg>
            </div>

            <Chair />

            {/* cursor */}
            <svg width="26" height="36" viewBox="0 0 26 36" className="absolute left-[839px] top-[113px]">
                <path d="M2 2V28L9 22 14 34 20 31 15 20 25 20z" fill="#000" stroke="#fff" strokeWidth="2" />
            </svg>

            <div className="absolute left-[1046px] top-[186px] w-[2325px] h-[1391px] rounded-[30px] bg-linear-to-b from-[#333] from-10% to-[#2b2b2b] to-40%" />
            <SlateEditor />
        </div>
    );
}
